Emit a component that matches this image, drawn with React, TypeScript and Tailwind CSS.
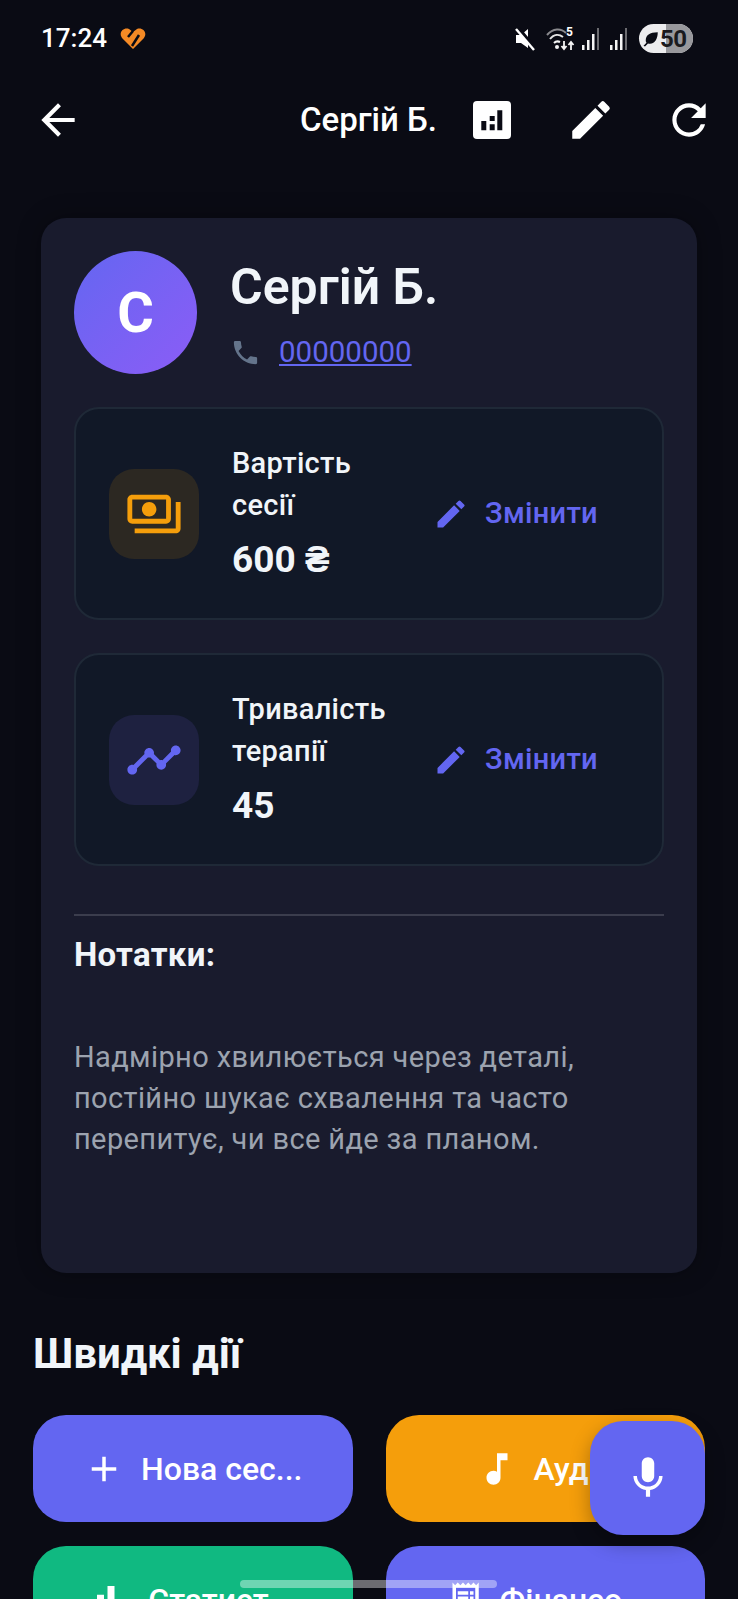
import React from 'react';
import {
  MdAdd,
  MdArrowBack,
  MdBarChart,
  MdEdit,
  MdMic,
  MdMusicNote,
  MdOutlinePayments,
  MdPhone,
  MdReceiptLong,
  MdRefresh,
  MdTimeline,
} from 'react-icons/md';

const SignalBars = () => (
  <svg width="18" height="24" viewBox="0 0 18 24">
    <rect x="0" y="18" width="2.500" height="5" fill="#f5f5f5" />
    <rect x="5" y="13" width="2.500" height="10" fill="#f5f5f5" />
    <rect x="10" y="7" width="2.500" height="16" fill="#f5f5f5" />
    <rect x="15" y="1" width="2" height="22" fill="#6b6b70" />
  </svg>
);

const StatusBar = () => (
  <div className="flex h-[76px] items-center pl-[41px] pr-[45px] pt-[1px]">
    <span className="text-[26px] font-medium text-white">17:24</span>
    <svg className="ml-[13px]" width="26" height="21" viewBox="0 0 26 21">
      <path d="M13 21 L2 10 C-2 4 4 -1 9 1 L13 4 L17 1 C22 -1 28 4 24 10 Z" fill="#f58a25" />
      <path d="M8 9 L13 3 M12 18 L19 7" stroke="#0a0b14" strokeWidth="2.500" fill="none" />
    </svg>
    <div className="ml-auto flex items-center">
      <svg width="21" height="24" viewBox="0 0 21 24">
        <path d="M1 8h5l7-6v19l-7-5H1z" fill="#fff" />
        <path d="M3 1l18 22" stroke="#0a0b14" strokeWidth="4" />
        <path d="M1 2l18 21" stroke="#fff" strokeWidth="2.400" />
      </svg>
      <div className="relative ml-[10px] h-[26px] w-[30px]">
        <svg width="30" height="26" viewBox="0 0 30 26">
          <path d="M1 9 C7 2 15 2 20 7" stroke="#8a8a8e" strokeWidth="2" fill="none" />
          <path d="M4 13 C8 8 13 8 17 11" stroke="#e5e5e5" strokeWidth="2" fill="none" />
          <path d="M8 17 C10 15 12 15 14 16" stroke="#f5f5f5" strokeWidth="2" fill="none" />
          <circle cx="11" cy="21" r="2" fill="#f5f5f5" />
          <path d="M18 15v8M15.500 20l2.500 3 2.500-3M25 24v-8M22.500 19l2.500-3 2.500 3" stroke="#f5f5f5" strokeWidth="1.800" fill="none" />
        </svg>
        <span className="absolute right-[3px] top-0 text-[12px] font-bold leading-none text-white">5</span>
      </div>
      <div className="ml-[6px]">
        <SignalBars />
      </div>
      <div className="ml-[10px]">
        <SignalBars />
      </div>
      <div className="relative ml-[11px] flex h-[29px] w-[54px] items-center overflow-hidden rounded-full bg-[#ececee]">
        <div className="absolute inset-y-0 right-0 w-[27px] bg-[#98989c]" />
        <svg className="relative ml-[3px] shrink-0" width="18" height="18" viewBox="0 0 24 24">
          <path d="M21 3C10 3 5 7 5 14c0 2 1 3 1 3L2 21l2 1 4-4c7 2 13-4 13-15z" fill="#0a0b14" />
        </svg>
        <span className="relative text-[24px] font-bold leading-none tracking-[-0.5px] text-[#1a1a1e]">50</span>
      </div>
    </div>
  </div>
);

const StatsIcon = () => (
  <svg className="ml-[36px]" width="38" height="38" viewBox="0 0 38 38">
    <rect width="38" height="38" rx="4" fill="#fff" />
    <path d="M8.300 20h5v9.300h-5zM16.700 15h5v5h-5zM16.700 23.300h5v6h-5zM24.300 9.300h5v20h-5z" fill="#0a0b14" />
  </svg>
);

const AppBar = () => (
  <div className="flex h-[88px] items-center pl-[33px] pr-[24px]">
    <MdArrowBack className="text-[50px] text-white" />
    <span className="ml-auto text-[33px] font-medium text-white">Сергій Б.</span>
    <StatsIcon />
    <MdEdit className="ml-[55px] text-[50px] text-white" />
    <MdRefresh className="ml-[48px] text-[50px] text-white" />
  </div>
);

type InfoBoxProps = {
  icon: React.ReactNode;
  iconBg: string;
  line1: string;
  line2: string;
  value: string;
};

const InfoBox = ({ icon, iconBg, line1, line2, value }: InfoBoxProps) => (
  <div className="flex h-[213px] items-center rounded-[25px] border-2 border-[#1f2937] bg-[#111827] pl-[33px]">
    <div className={`flex h-[90px] w-[90px] shrink-0 items-center justify-center rounded-[25px] ${iconBg}`}>{icon}</div>
    <div className="ml-[33px] w-[201px] pb-[3px]">
      <div className="text-[29px] font-medium leading-[42px] tracking-[0.3px] text-[#f1f5f9]">
        {line1}
        <br />
        {line2}
      </div>
      <div className="mt-[12px] text-[37px] font-bold leading-[44px] text-[#f1f5f9]">{value}</div>
    </div>
    <MdEdit className="text-[36px] text-[#6366f1]" />
    <span className="ml-[16px] text-[29px] font-medium tracking-[0.3px] text-[#6366f1]">Змінити</span>
  </div>
);

const ActionButton = ({
  icon,
  label,
  bg,
}: {
  icon: React.ReactNode;
  label: string;
  bg: string;
}) => (
  <div className={`flex h-[107px] items-center justify-center gap-[16px] rounded-[33px] text-white ${bg}`}>
    {icon}
    <span className="text-[32px] font-medium">{label}</span>
  </div>
);

export default function App() {
  return (
    <div className="relative h-[1599px] w-[738px] overflow-hidden bg-[#0a0b14] font-['Roboto',sans-serif]">
      <StatusBar />
      <AppBar />

      <div className="mx-[41px] mt-[54px] h-[1055px] rounded-[25px] bg-[#191b2d] px-[33px] pt-[33px] shadow-[0_0_24px_rgba(0,0,0,0.3)]">
        <div className="flex">
          <div className="flex h-[123px] w-[123px] items-center justify-center rounded-full bg-gradient-to-br from-[#6366f1] to-[#8b5cf6] text-[56px] font-bold text-white">
            С
          </div>
          <div className="ml-[33px]">
            <div className="mt-[4px] text-[50px] font-semibold leading-[64px] text-[#f1f5f9]">Сергій Б.</div>
            <div className="mt-[13px] flex items-center">
              <MdPhone className="text-[31px] text-[#64748b]" />
              <span className="ml-[18px] text-[29.5px] leading-[40px] text-[#6366f1] underline">00000000</span>
            </div>
          </div>
        </div>

        <div className="mt-[33px] flex flex-col gap-[33px]">
          <InfoBox
            icon={<MdOutlinePayments className="text-[58px] text-[#f59e0b]" />}
            iconBg="bg-[#2c2822]"
            line1="Вартість"
            line2="сесії"
            value="600 ₴"
          />
          <InfoBox
            icon={<MdTimeline className="text-[58px] text-[#6366f1]" />}
            iconBg="bg-[#1e2140]"
            line1="Тривалість"
            line2="терапії"
            value="45"
          />
        </div>

        <div className="mt-[48px] h-[2px] bg-[#3b3d4d]" />
        <div className="mt-[19px] text-[33px] font-bold leading-[40px] tracking-[0.3px] text-[#f1f5f9]">Нотатки:</div>
        <p className="mt-[62px] text-[29px] leading-[41px] tracking-[0.38px] text-[#9ca3af]">
          Надмірно хвилюється через деталі, постійно шукає схвалення та часто перепитує, чи все йде за планом.
        </p>
      </div>

      <h2 className="ml-[33px] mt-[55px] text-[42px] font-bold leading-[52px] text-[#f1f5f9]">Швидкі дії</h2>

      <div className="mx-[33px] mt-[35px] grid grid-cols-2 gap-x-[33px] gap-y-[24px]">
        <ActionButton icon={<MdAdd className="text-[42px]" />} label="Нова сес..." bg="bg-[#6366f1]" />
        <ActionButton icon={<MdMusicNote className="text-[42px]" />} label="Аудіо" bg="bg-[#f59e0b]" />
        <ActionButton icon={<MdBarChart className="text-[42px]" />} label="Статист..." bg="bg-[#10b981]" />
        <ActionButton icon={<MdReceiptLong className="text-[42px]" />} label="Фінансо..." bg="bg-[#6366f1]" />
      </div>

      <div className="absolute left-[590px] top-[1421px] flex h-[114px] w-[115px] items-center justify-center rounded-[33px] bg-[#6366f1] shadow-[0_8px_20px_rgba(0,0,0,0.3)]">
        <MdMic className="text-[50px] text-white" />
      </div>

      <div className="absolute left-[240px] top-[1580px] h-[8px] w-[257px] rounded-full bg-white/40" />
    </div>
  );
}
